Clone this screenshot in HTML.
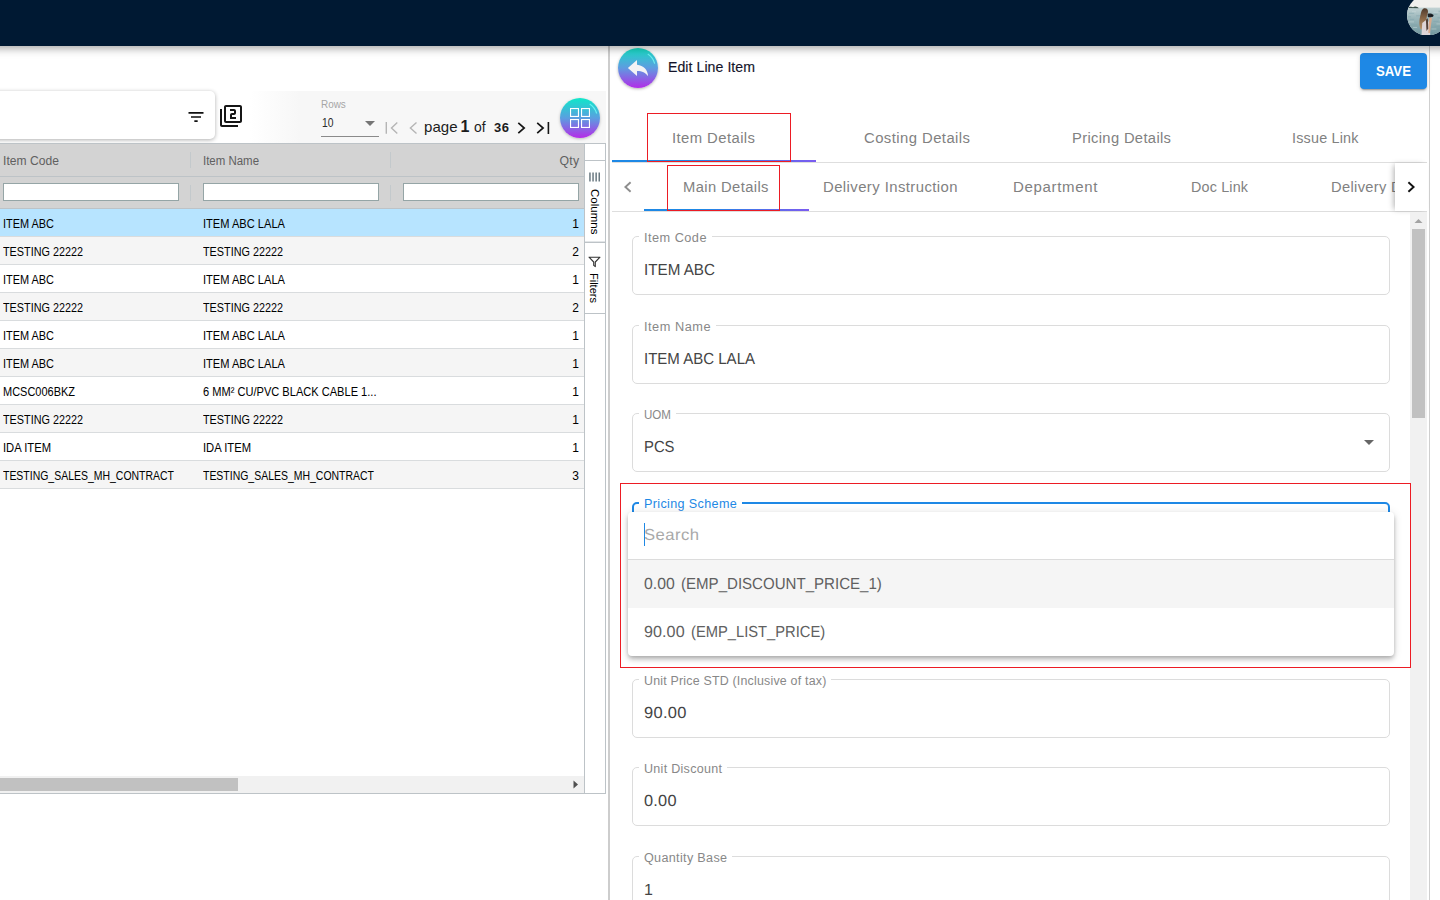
<!DOCTYPE html>
<html lang="en">
<head>
<meta charset="utf-8">
<title>Edit Line Item</title>
<style>
html,body{margin:0;padding:0;}
body{width:1440px;height:900px;overflow:hidden;background:#fff;font-family:"Liberation Sans",sans-serif;}
#app{position:relative;width:1440px;height:900px;overflow:hidden;background:#fff;}
.a{position:absolute;box-sizing:border-box;}
.t{position:absolute;white-space:nowrap;transform-origin:0 50%;font-family:"Liberation Sans",sans-serif;}
.row{position:absolute;left:0;width:584px;height:28px;box-sizing:border-box;border-bottom:1px solid #d9dcde;}
.fin{position:absolute;top:183px;height:18px;box-sizing:border-box;background:#fff;border:1px solid #95a5a6;}
.fld{position:absolute;left:632px;width:758px;height:59px;box-sizing:border-box;border:1px solid #dcdcdc;border-radius:5px;}
.notch{position:absolute;height:3px;background:#fff;}
</style>
</head>
<body>
<div id="app">
<!-- ===== top header ===== -->
<div class="a" style="left:-30px;top:0;width:1500px;height:46px;background:#001933;box-shadow:0 2px 9px rgba(0,0,0,.38);z-index:50;"></div>
<svg class="a" style="left:1407px;top:-5.5px;z-index:51;" width="40.6" height="40.6" viewBox="0 0 40 40">
  <defs><clipPath id="avc"><circle cx="20" cy="20" r="20"/></clipPath>
  <linearGradient id="sea" x1="0" y1="0" x2="0" y2="1"><stop offset="0" stop-color="#c3d3d4"/><stop offset="0.35" stop-color="#9db8bc"/><stop offset="1" stop-color="#6f959c"/></linearGradient>
  <linearGradient id="hair" x1="0" y1="0" x2="0" y2="1"><stop offset="0" stop-color="#4f3a2c"/><stop offset="0.5" stop-color="#8a6848"/><stop offset="1" stop-color="#b8946c"/></linearGradient></defs>
  <g clip-path="url(#avc)">
    <rect x="0" y="0" width="40" height="40" fill="#f1f0ed"/>
    <rect x="0" y="12.400" width="40" height="28" fill="url(#sea)"/>
    <g stroke="#7fa3aa" stroke-width="0.7" opacity="0.75" fill="none">
      <path d="M2 18h5M9 20.500h6M3 24h4M24 19h6M30 22.500h7M26 26h5M4 29.500h6M27 31h7M8 34.500h5M25 36h6M31 16h6M1 21.500h3"/>
    </g>
    <g stroke="#cfdedf" stroke-width="0.6" opacity="0.8" fill="none">
      <path d="M5 16.500h4M26 17h5M2 26.500h5M29 28.500h6M6 32h4M24 33.500h5M32 24.500h5"/>
    </g>
    <path d="M1 12.900Q2.300 11.200 4 11.700Q5.200 11.900 6 12Q7.500 10.900 9.300 11.600Q10.800 12 11.600 13Z" fill="#3a4f47"/>
    <path d="M17.400 13C20 13 21.200 15 20.600 17.500L19.600 21L18.600 27L17 33L13.500 34C11.500 30 12 24 13.500 19C14 15.500 15.500 13 17.400 13Z" fill="url(#hair)"/>
    <path d="M15 27.500L19 24.500L22.500 27L23 41H14.200Z" fill="#ddd5d8"/>
    <path d="M18.600 24.500L20.600 23L21 33L19.200 35.500Z" fill="#54423a"/>
    <path d="M22 22L24.600 22.500L23.600 30L22.600 37.500L21 37.500L21.500 29Z" fill="#d9aa8c"/>
    <rect x="20.400" y="18.200" width="4.200" height="3.800" rx="1" fill="#1d2126"/>
    <circle cx="24.800" cy="20.300" r="1.300" fill="#15181c"/>
  </g>
</svg>

<!-- ===== splitter + right edge line ===== -->
<div class="a" style="left:608px;top:46px;width:2px;height:854px;background:#cdcdcd;"></div>
<div class="a" style="left:1429px;top:46px;width:1px;height:854px;background:#cfcfcf;"></div>

<!-- ===== left toolbar ===== -->
<div class="a" style="left:0;top:91px;width:606px;height:52px;background:linear-gradient(to right,#fff 250px,#f7f7f7 300px);"></div>
<div class="a" style="left:-10px;top:91px;width:225px;height:48px;background:#fff;border-radius:5px;box-shadow:0 1px 4px rgba(0,0,0,.32);"></div>
<svg class="a" style="left:185.5px;top:107px;" width="20" height="20" viewBox="0 0 24 24"><path fill="#111" d="M10 18h4v-2h-4v2zM3 6v2h18V6H3zm3 7h12v-2H6v2z"/></svg>
<svg class="a" style="left:219.3px;top:104px;" width="24" height="24" viewBox="0 0 24 24"><path fill="#161616" d="M3 5H1v16c0 1.1.9 2 2 2h16v-2H3V5zm18-4H7c-1.1 0-2 .9-2 2v14c0 1.1.9 2 2 2h14c1.1 0 2-.9 2-2V3c0-1.1-.9-2-2-2zm0 16H7V3h14v14zm-4-4h-4v-2h2c1.1 0 2-.89 2-2V7c0-1.11-.9-2-2-2h-4v2h4v2h-2c-1.1 0-2 .89-2 2v4h6v-2z"/></svg>
<!-- rows select -->
<div class="a" style="left:321px;top:136px;width:58px;height:1px;background:#8a8a8a;"></div>
<svg class="a" style="left:365px;top:121px;" width="10" height="5" viewBox="0 0 10 5"><path d="M0 0h10L5 5z" fill="#757575"/></svg>
<!-- pager icons -->
<svg class="a" style="left:384px;top:120px;" width="170" height="16" viewBox="0 0 170 16">
  <g fill="none">
    <path d="M2.3 2v11.8" stroke="#b5b5b5" stroke-width="1.4"/><path d="M13.3 2.6L7.5 8l5.8 5.4" stroke="#b5b5b5" stroke-width="1.4"/>
    <path d="M32.5 2.6L26.4 8l6.1 5.4" stroke="#b5b5b5" stroke-width="1.4"/>
    <path d="M134.3 2.8L140.2 8l-5.9 5.2" stroke="#161616" stroke-width="1.7"/>
    <path d="M153.2 2.8L159.1 8l-5.9 5.2" stroke="#161616" stroke-width="1.7"/><path d="M164.4 2v12" stroke="#161616" stroke-width="1.6"/>
  </g>
</svg>
<!-- grid toggle button -->
<div class="a" style="left:560px;top:98px;width:40px;height:40px;border-radius:50%;background:linear-gradient(to bottom,#0fe8c9 0%,#5a9fe0 50%,#b52be8 100%);box-shadow:0 1px 3px rgba(0,0,0,.25);"></div>
<svg class="a" style="left:560px;top:98px;" width="40" height="40" viewBox="0 0 40 40">
  <path d="M29.7 6A17.2 17.2 0 0 1 36.7 15.5" fill="none" stroke="rgba(110,250,245,.85)" stroke-width="1.2"/>
  <g fill="none" stroke="#fff" stroke-width="1.1">
    <rect x="10.55" y="10.55" width="7.9" height="7.9"/><rect x="21.55" y="10.55" width="7.9" height="7.9"/>
    <rect x="10.55" y="21.55" width="7.9" height="7.9"/><rect x="21.55" y="21.55" width="7.9" height="7.9"/>
  </g>
</svg>

<!-- ===== grid ===== -->
<div class="a" style="left:0;top:143px;width:606px;height:651px;border:1px solid #bdc3c7;border-left:none;background:#fff;"></div>
<div class="a" style="left:0;top:144px;width:584px;height:65px;background:#d3d3d3;border-bottom:1px solid #bdc3c7;"></div>
<div class="a" style="left:0;top:176px;width:584px;height:1px;background:#bdc3c7;"></div>
<div class="a" style="left:190px;top:152px;width:1px;height:16px;background:#c3c9cc;"></div>
<div class="a" style="left:390px;top:152px;width:1px;height:16px;background:#c3c9cc;"></div>
<div class="a" style="left:190px;top:185px;width:1px;height:16px;background:#c3c9cc;"></div>
<div class="a" style="left:390px;top:185px;width:1px;height:16px;background:#c3c9cc;"></div>
<div class="fin" style="left:3px;width:176px;"></div>
<div class="fin" style="left:203px;width:176px;"></div>
<div class="fin" style="left:403px;width:176px;"></div>
<div class="row" style="top:209px;background:#b7e4ff;"></div>
<div class="row" style="top:237px;background:#f5f5f5;"></div>
<div class="row" style="top:265px;background:#fff;"></div>
<div class="row" style="top:293px;background:#f5f5f5;"></div>
<div class="row" style="top:321px;background:#fff;"></div>
<div class="row" style="top:349px;background:#f5f5f5;"></div>
<div class="row" style="top:377px;background:#fff;"></div>
<div class="row" style="top:405px;background:#f5f5f5;"></div>
<div class="row" style="top:433px;background:#fff;"></div>
<div class="row" style="top:461px;background:#f5f5f5;"></div>
<!-- grid side bar -->
<div class="a" style="left:584px;top:144px;width:1px;height:649px;background:#bdc3c7;"></div>
<div class="a" style="left:585px;top:160px;width:20px;height:1px;background:#bdc3c7;"></div>
<div class="a" style="left:585px;top:241px;width:20px;height:1px;background:#e3e6e8;"></div>
<div class="a" style="left:585px;top:242px;width:20px;height:1px;background:#bdc3c7;"></div>
<div class="a" style="left:585px;top:313px;width:20px;height:1px;background:#bdc3c7;"></div>
<svg class="a" style="left:589px;top:172px;" width="12" height="10" viewBox="0 0 12 10"><g fill="#6b7a82"><rect x="0.2" y="0.5" width="1.5" height="9"/><rect x="3.3" y="0.5" width="1.5" height="9"/><rect x="6.4" y="0.5" width="1.5" height="9"/><rect x="9.5" y="0.5" width="1.5" height="9"/></g></svg>
<svg class="a" style="left:588px;top:256px;" width="13" height="12" viewBox="0 0 13 12"><path d="M1 1.2h11L7.3 6v4.6L5.7 9.4V6z" fill="none" stroke="#333" stroke-width="1.1" stroke-linejoin="round"/></svg>
<!-- horizontal scrollbar -->
<div class="a" style="left:0;top:776px;width:584px;height:17px;background:#f1f1f1;"></div>
<div class="a" style="left:0;top:778px;width:238px;height:13px;background:#c1c1c1;"></div>
<svg class="a" style="left:573.3px;top:780px;" width="6" height="9" viewBox="0 0 6 9"><path d="M0.5 0.5L5 4.5L0.5 8.5z" fill="#505050"/></svg>

<!-- ===== right panel header ===== -->
<div class="a" style="left:618px;top:48px;width:40px;height:40px;border-radius:50%;background:linear-gradient(to bottom,#16e0c6 0%,#5e9be0 50%,#b22ce8 100%);box-shadow:0 1px 3px rgba(0,0,0,.3);"></div>
<svg class="a" style="left:618px;top:48px;" width="40" height="40" viewBox="0 0 40 40">
  <path d="M29.8 6A17.2 17.2 0 0 1 36.7 15.6" fill="none" stroke="rgba(120,250,245,.8)" stroke-width="1.2"/>
  <path d="M9.9 19.9L19 12V16.8C25.6 17.5 29.6 21.6 30.1 28.3C27.6 24.6 24.2 23.1 19 23V28.1Z" fill="#f3f3f5"/>
</svg>
<div class="a" style="left:1360px;top:53px;width:67px;height:36px;border-radius:4px;background:#1e88e5;box-shadow:0 3px 1px -2px rgba(0,0,0,.2),0 2px 2px 0 rgba(0,0,0,.14),0 1px 5px 0 rgba(0,0,0,.12);"></div>

<!-- ===== tabs ===== -->
<div class="a" style="left:612px;top:162px;width:815px;height:1px;background:#dedede;"></div>
<div class="a" style="left:612px;top:160px;width:204px;height:2px;background:linear-gradient(to right,#1e88e5 0%,#1e88e5 35%,#7b5cf0 100%);"></div>
<div class="a" style="left:612px;top:211px;width:815px;height:1px;background:#dedede;"></div>
<div class="a" style="left:644px;top:209px;width:165px;height:2px;background:linear-gradient(to right,#1e88e5 0%,#1e88e5 35%,#7b5cf0 100%);"></div>
<!-- left chevron (disabled) -->
<svg class="a" style="left:620px;top:179px;" width="16" height="16" viewBox="0 0 16 16"><path d="M10.6 3.2L5.4 8l5.2 4.8" fill="none" stroke="#8e8e8e" stroke-width="1.9"/></svg>
<!-- right pagination box -->
<div class="a" style="left:1395px;top:163px;width:33px;height:48px;background:#fff;box-shadow:-3px 0 6px -2px rgba(0,0,0,.32);z-index:6;"></div>
<svg class="a" style="left:1403px;top:179px;z-index:7;" width="16" height="16" viewBox="0 0 16 16"><path d="M5.4 3.2L10.6 8l-5.2 4.8" fill="none" stroke="#111" stroke-width="1.9"/></svg>
<!-- red annotation boxes -->
<div class="a" style="left:647px;top:113px;width:144px;height:49px;border:1px solid #ec1c24;z-index:8;"></div>
<div class="a" style="left:667px;top:165px;width:113px;height:46px;border:1px solid #ec1c24;z-index:8;"></div>

<!-- ===== form fields ===== -->
<div class="fld" style="top:236px;"></div>
<div class="fld" style="top:325px;"></div>
<div class="fld" style="top:413px;"></div>
<div class="fld" style="top:502px;border:2px solid #1e88e5;"></div>
<div class="fld" style="top:679px;"></div>
<div class="fld" style="top:767px;"></div>
<div class="fld" style="top:856px;"></div>
<div class="notch" style="left:639px;top:235px;width:73px;"></div>
<div class="notch" style="left:639px;top:324px;width:77px;"></div>
<div class="notch" style="left:639px;top:412px;width:37px;"></div>
<div class="notch" style="left:639px;top:501px;width:103px;height:4px;"></div>
<div class="notch" style="left:639px;top:678px;width:192px;"></div>
<div class="notch" style="left:639px;top:766px;width:88px;"></div>
<div class="notch" style="left:639px;top:855px;width:93px;"></div>
<svg class="a" style="left:1364px;top:440px;" width="10" height="5" viewBox="0 0 10 5"><path d="M0 0h10L5 5z" fill="#666"/></svg>

<!-- dropdown panel -->
<div class="a" style="left:628px;top:512px;width:766px;height:144px;background:#fff;border-radius:4px;box-shadow:0 2px 4px -1px rgba(0,0,0,.2),0 4px 5px 0 rgba(0,0,0,.14),0 1px 10px 0 rgba(0,0,0,.12);z-index:10;overflow:hidden;">
  <div class="a" style="left:0;top:47px;width:766px;height:1px;background:#dcdcdc;"></div>
  <div class="a" style="left:0;top:48px;width:766px;height:48px;background:#f5f5f5;"></div>
  <div class="a" style="left:16px;top:11px;width:1px;height:23px;background:#1e88e5;"></div>
</div>
<div class="a" style="left:620px;top:483px;width:791px;height:185px;border:1px solid #ec1c24;z-index:12;"></div>

<!-- right panel scrollbar -->
<div class="a" style="left:1410px;top:212px;width:17px;height:688px;background:#f1f1f1;z-index:9;"></div>
<div class="a" style="left:1412px;top:229px;width:13px;height:189px;background:#c1c1c1;z-index:9;"></div>
<svg class="a" style="left:1414px;top:218px;z-index:9;" width="9" height="6" viewBox="0 0 9 6"><path d="M0.5 5L4.5 1L8.5 5z" fill="#a3a3a3"/></svg>

<span class="t" style="top:100.00px;font-size:10px;line-height:10px;color:#a6a6a6;left:321.20px;transform:scaleX(0.9914);">Rows</span>
<span class="t" style="top:116.00px;font-size:13px;line-height:13px;color:#2a2a2a;left:321.60px;transform:scaleX(0.7948);">10</span>
<span class="t" style="top:119.00px;font-size:15px;line-height:15px;color:#1c1c1c;left:423.90px;letter-spacing:0.021px;transform:scaleX(1.0019);">page</span>
<span class="t" style="top:119.00px;font-size:16px;line-height:16px;color:#1c1c1c;font-weight:700;left:460.60px;">1</span>
<span class="t" style="top:119.00px;font-size:15px;line-height:15px;color:#1c1c1c;left:474.40px;transform:scaleX(0.9268);">of</span>
<span class="t" style="top:122.00px;font-size:12.5px;line-height:12.5px;color:#1c1c1c;font-weight:700;left:493.90px;letter-spacing:0.537px;transform:scaleX(1.0386);">36</span>
<span class="t" style="top:155.00px;font-size:12px;line-height:12px;color:#606060;left:3.30px;letter-spacing:0.040px;transform:scaleX(1.0058);">Item Code</span>
<span class="t" style="top:155.00px;font-size:12px;line-height:12px;color:#606060;left:203.30px;transform:scaleX(0.9542);">Item Name</span>
<span class="t" style="top:155.00px;font-size:12px;line-height:12px;color:#606060;right:860.79px;transform-origin:100% 50%;letter-spacing:0.205px;transform:scaleX(1.0219);">Qty</span>
<span class="t" style="top:218.00px;font-size:12px;line-height:12px;color:#000;left:3.30px;transform:scaleX(0.9105);">ITEM ABC</span>
<span class="t" style="top:218.00px;font-size:12px;line-height:12px;color:#000;left:203.30px;transform:scaleX(0.9244);">ITEM ABC LALA</span>
<span class="t" style="top:218.00px;font-size:12px;line-height:12px;color:#000;right:861.00px;transform-origin:100% 50%;">1</span>
<span class="t" style="top:246.00px;font-size:12px;line-height:12px;color:#000;left:3.30px;transform:scaleX(0.9017);">TESTING 22222</span>
<span class="t" style="top:246.00px;font-size:12px;line-height:12px;color:#000;left:203.30px;transform:scaleX(0.9017);">TESTING 22222</span>
<span class="t" style="top:246.00px;font-size:12px;line-height:12px;color:#000;right:861.00px;transform-origin:100% 50%;">2</span>
<span class="t" style="top:274.00px;font-size:12px;line-height:12px;color:#000;left:3.30px;transform:scaleX(0.9105);">ITEM ABC</span>
<span class="t" style="top:274.00px;font-size:12px;line-height:12px;color:#000;left:203.30px;transform:scaleX(0.9244);">ITEM ABC LALA</span>
<span class="t" style="top:274.00px;font-size:12px;line-height:12px;color:#000;right:861.00px;transform-origin:100% 50%;">1</span>
<span class="t" style="top:302.00px;font-size:12px;line-height:12px;color:#000;left:3.30px;transform:scaleX(0.9017);">TESTING 22222</span>
<span class="t" style="top:302.00px;font-size:12px;line-height:12px;color:#000;left:203.30px;transform:scaleX(0.9017);">TESTING 22222</span>
<span class="t" style="top:302.00px;font-size:12px;line-height:12px;color:#000;right:861.00px;transform-origin:100% 50%;">2</span>
<span class="t" style="top:330.00px;font-size:12px;line-height:12px;color:#000;left:3.30px;transform:scaleX(0.9105);">ITEM ABC</span>
<span class="t" style="top:330.00px;font-size:12px;line-height:12px;color:#000;left:203.30px;transform:scaleX(0.9244);">ITEM ABC LALA</span>
<span class="t" style="top:330.00px;font-size:12px;line-height:12px;color:#000;right:861.00px;transform-origin:100% 50%;">1</span>
<span class="t" style="top:358.00px;font-size:12px;line-height:12px;color:#000;left:3.30px;transform:scaleX(0.9105);">ITEM ABC</span>
<span class="t" style="top:358.00px;font-size:12px;line-height:12px;color:#000;left:203.30px;transform:scaleX(0.9244);">ITEM ABC LALA</span>
<span class="t" style="top:358.00px;font-size:12px;line-height:12px;color:#000;right:861.00px;transform-origin:100% 50%;">1</span>
<span class="t" style="top:386.00px;font-size:12px;line-height:12px;color:#000;left:3.30px;transform:scaleX(0.9148);">MCSC006BKZ</span>
<span class="t" style="top:386.00px;font-size:12px;line-height:12px;color:#000;left:203.30px;transform:scaleX(0.9226);">6 MM² CU/PVC BLACK CABLE 1...</span>
<span class="t" style="top:386.00px;font-size:12px;line-height:12px;color:#000;right:861.00px;transform-origin:100% 50%;">1</span>
<span class="t" style="top:414.00px;font-size:12px;line-height:12px;color:#000;left:3.30px;transform:scaleX(0.9017);">TESTING 22222</span>
<span class="t" style="top:414.00px;font-size:12px;line-height:12px;color:#000;left:203.30px;transform:scaleX(0.9017);">TESTING 22222</span>
<span class="t" style="top:414.00px;font-size:12px;line-height:12px;color:#000;right:861.00px;transform-origin:100% 50%;">1</span>
<span class="t" style="top:442.00px;font-size:12px;line-height:12px;color:#000;left:3.30px;transform:scaleX(0.9349);">IDA ITEM</span>
<span class="t" style="top:442.00px;font-size:12px;line-height:12px;color:#000;left:203.30px;transform:scaleX(0.9349);">IDA ITEM</span>
<span class="t" style="top:442.00px;font-size:12px;line-height:12px;color:#000;right:861.00px;transform-origin:100% 50%;">1</span>
<span class="t" style="top:470.00px;font-size:12px;line-height:12px;color:#000;left:3.30px;transform:scaleX(0.8722);">TESTING_SALES_MH_CONTRACT</span>
<span class="t" style="top:470.00px;font-size:12px;line-height:12px;color:#000;left:203.30px;transform:scaleX(0.8722);">TESTING_SALES_MH_CONTRACT</span>
<span class="t" style="top:470.00px;font-size:12px;line-height:12px;color:#000;right:861.00px;transform-origin:100% 50%;">3</span>
<span class="t" style="top:-10.00px;font-size:12px;line-height:12px;color:#000;left:0.00px;left:587.5px;top:188.5px;writing-mode:vertical-lr;line-height:14px;font-size:11.5px;">Columns</span>
<span class="t" style="top:-10.00px;font-size:12px;line-height:12px;color:#000;left:0.00px;left:587.3px;top:272.5px;writing-mode:vertical-lr;line-height:14px;font-size:11px;">Filters</span>
<span class="t" style="top:60.00px;font-size:14px;line-height:14px;color:#14142a;left:667.60px;letter-spacing:0.053px;transform:scaleX(1.0081);-webkit-text-stroke:0.15px #14142a;">Edit Line Item</span>
<span class="t" style="top:64.00px;font-size:14px;line-height:14px;color:#fff;font-weight:700;left:1376.20px;transform:scaleX(0.9436);">SAVE</span>
<span class="t" style="top:131.00px;font-size:14px;line-height:14px;color:#818181;left:672.00px;letter-spacing:0.401px;transform:scaleX(1.0596);">Item Details</span>
<span class="t" style="top:131.00px;font-size:14px;line-height:14px;color:#818181;left:864.00px;letter-spacing:0.410px;transform:scaleX(1.061);">Costing Details</span>
<span class="t" style="top:131.00px;font-size:14px;line-height:14px;color:#818181;left:1071.60px;letter-spacing:0.331px;transform:scaleX(1.0518);">Pricing Details</span>
<span class="t" style="top:131.00px;font-size:14px;line-height:14px;color:#818181;left:1291.70px;letter-spacing:0.189px;transform:scaleX(1.027);">Issue Link</span>
<span class="t" style="top:180.00px;font-size:14px;line-height:14px;color:#818181;left:683.00px;letter-spacing:0.375px;transform:scaleX(1.0535);">Main Details</span>
<span class="t" style="top:180.00px;font-size:14px;line-height:14px;color:#818181;left:823.00px;letter-spacing:0.394px;transform:scaleX(1.0629);">Delivery Instruction</span>
<span class="t" style="top:180.00px;font-size:14px;line-height:14px;color:#818181;left:1013.00px;letter-spacing:0.602px;transform:scaleX(1.0741);">Department</span>
<span class="t" style="top:180.00px;font-size:14px;line-height:14px;color:#818181;left:1191.00px;letter-spacing:0.179px;transform:scaleX(1.023);">Doc Link</span>
<span class="t" style="top:180.00px;font-size:14px;line-height:14px;color:#818181;left:1330.50px;letter-spacing:0.317px;transform:scaleX(1.0489);overflow:hidden;width:61.97px;">Delivery Details</span>
<span class="t" style="top:232.00px;font-size:12px;line-height:12px;color:#888888;left:644.00px;letter-spacing:0.433px;transform:scaleX(1.0625);">Item Code</span>
<span class="t" style="top:321.00px;font-size:12px;line-height:12px;color:#888888;left:644.00px;letter-spacing:0.473px;transform:scaleX(1.0645);">Item Name</span>
<span class="t" style="top:409.00px;font-size:12px;line-height:12px;color:#888888;left:644.00px;transform:scaleX(0.9643);">UOM</span>
<span class="t" style="top:498.00px;font-size:12px;line-height:12px;color:#1e88e5;left:644.00px;letter-spacing:0.328px;transform:scaleX(1.0508);">Pricing Scheme</span>
<span class="t" style="top:675.00px;font-size:12px;line-height:12px;color:#888888;left:644.00px;letter-spacing:0.188px;transform:scaleX(1.0354);">Unit Price STD (Inclusive of tax)</span>
<span class="t" style="top:763.00px;font-size:12px;line-height:12px;color:#888888;left:644.00px;letter-spacing:0.270px;transform:scaleX(1.0454);">Unit Discount</span>
<span class="t" style="top:852.00px;font-size:12px;line-height:12px;color:#888888;left:644.00px;letter-spacing:0.310px;transform:scaleX(1.0494);">Quantity Base</span>
<span class="t" style="top:263.00px;font-size:16px;line-height:16px;color:#444444;left:643.50px;transform:scaleX(0.9506);text-rendering:geometricPrecision;">ITEM ABC</span>
<span class="t" style="top:352.00px;font-size:16px;line-height:16px;color:#444444;left:643.50px;transform:scaleX(0.9386);text-rendering:geometricPrecision;">ITEM ABC LALA</span>
<span class="t" style="top:440.00px;font-size:16px;line-height:16px;color:#444444;left:643.50px;transform:scaleX(0.9269);text-rendering:geometricPrecision;">PCS</span>
<span class="t" style="top:706.00px;font-size:16px;line-height:16px;color:#444444;left:644.00px;letter-spacing:0.290px;transform:scaleX(1.029);text-rendering:geometricPrecision;">90.00</span>
<span class="t" style="top:794.00px;font-size:16px;line-height:16px;color:#444444;left:644.00px;letter-spacing:0.224px;transform:scaleX(1.0216);text-rendering:geometricPrecision;">0.00</span>
<span class="t" style="top:883.00px;font-size:16px;line-height:16px;color:#444444;left:644.00px;text-rendering:geometricPrecision;">1</span>
<span class="t" style="top:528.00px;font-size:16px;line-height:16px;color:#a9a9a9;left:644.00px;letter-spacing:0.421px;transform:scaleX(1.0415);text-rendering:geometricPrecision;z-index:11;">Search</span>
<span class="t" style="top:577.00px;font-size:16px;line-height:16px;color:#606060;left:644.10px;transform:scaleX(0.9859);text-rendering:geometricPrecision;z-index:11;">0.00 </span>
<span class="t" style="top:577.00px;font-size:16px;line-height:16px;color:#606060;left:681.00px;transform:scaleX(0.9411);text-rendering:geometricPrecision;z-index:11;">(EMP_DISCOUNT_PRICE_1)</span>
<span class="t" style="top:625.00px;font-size:16px;line-height:16px;color:#606060;left:644.10px;letter-spacing:0.069px;transform:scaleX(1.0069);text-rendering:geometricPrecision;z-index:11;">90.00 </span>
<span class="t" style="top:625.00px;font-size:16px;line-height:16px;color:#606060;left:691.00px;transform:scaleX(0.9204);text-rendering:geometricPrecision;z-index:11;">(EMP_LIST_PRICE)</span>
</div>
</body>
</html>
